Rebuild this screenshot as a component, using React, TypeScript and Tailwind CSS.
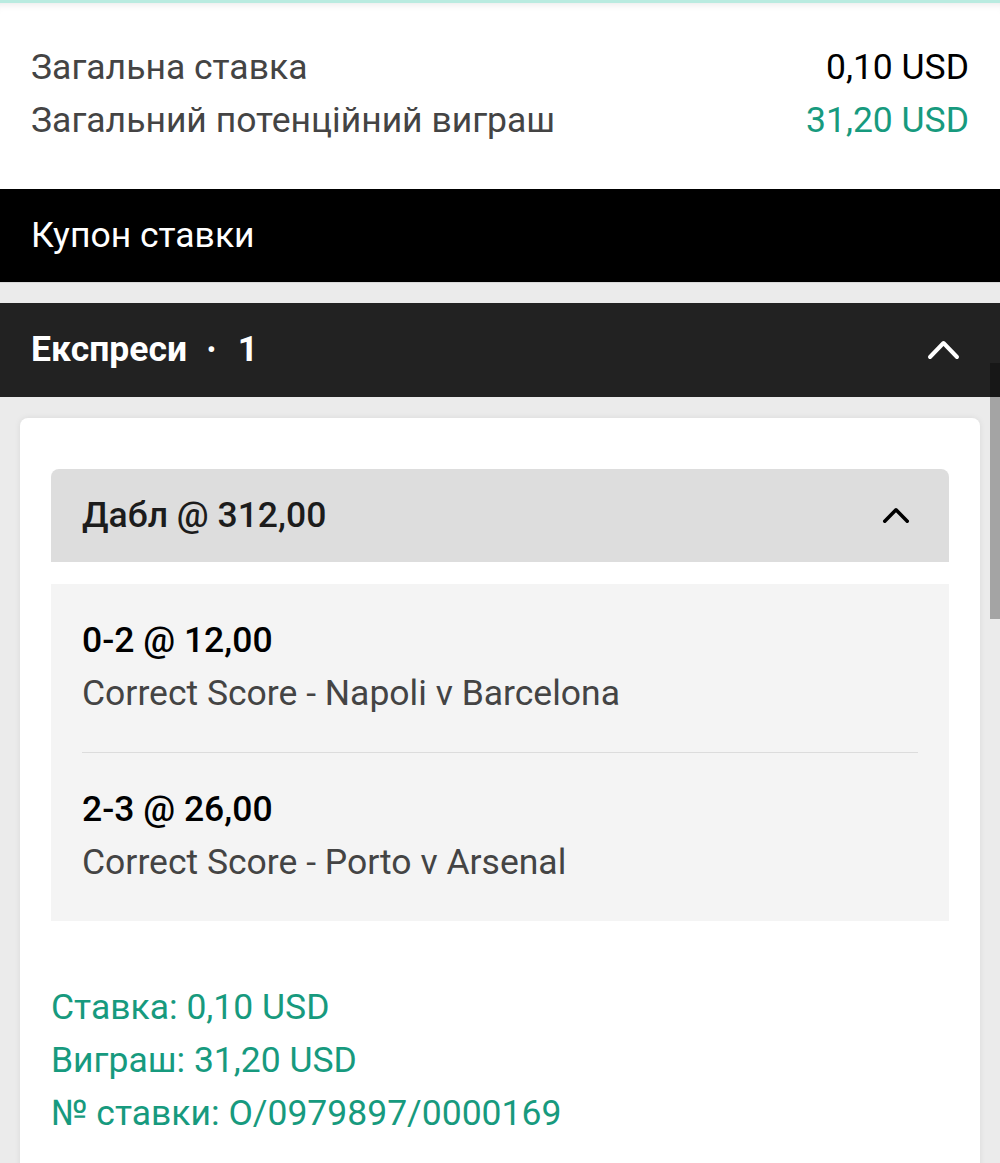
import React from "react";

const Chevron = ({ w, h, color, sw }: { w: number; h: number; color: string; sw: number }) => (
  <svg width={w} height={h} viewBox={`0 0 ${w} ${h}`} fill="none">
    <polyline
      points={`${sw / 2 + 1},${h - sw / 2 - 1} ${w / 2},${sw / 2 + 1} ${w - sw / 2 - 1},${h - sw / 2 - 1}`}
      stroke={color}
      strokeWidth={sw}
      strokeLinecap="round"
      strokeLinejoin="round"
    />
  </svg>
);

export default function App() {
  return (
    <div
      className="relative w-[1000px] h-[1163px] overflow-hidden bg-[#ebebeb]"
      style={{ fontFamily: "Roboto, 'Noto Sans', sans-serif" }}
    >
      {/* summary */}
      <div className="bg-white border-t-[3px] border-[#b9ebe0] shadow-[inset_0_8px_10px_-8px_rgba(0,0,0,0.12)] pt-[38px] pb-[42px] px-[31px]">
        <div className="flex justify-between items-center leading-[53px] text-[35.5px]">
          <span className="text-[#444]">Загальна ставка</span>
          <span className="text-black">0,10 USD</span>
        </div>
        <div className="flex justify-between items-center leading-[53px] text-[35.5px]">
          <span className="text-[#444]">Загальний потенційний виграш</span>
          <span className="text-[#179a7e]">31,20 USD</span>
        </div>
      </div>

      {/* coupon title */}
      <div className="h-[93px] bg-black flex items-center px-[31px] text-white text-[35.5px]">
        Купон ставки
      </div>

      <div className="h-[21px] bg-[#ebebeb] border-t border-[#d8d8d8]" />

      {/* expresses header */}
      <div className="h-[94px] bg-[#222222] flex items-center justify-between px-[31px] text-white text-[35.5px] font-bold">
        <span className="flex items-center">
          Експреси
          <span className="ml-[20px] mr-[22px] text-[24px]">•</span>
          1
        </span>
        <span className="mr-[9px]">
          <Chevron w={33} h={20} color="#ffffff" sw={4} />
        </span>
      </div>

      {/* card */}
      <div className="mx-5 mt-[21px] bg-white rounded-lg shadow-[0_0_6px_rgba(0,0,0,0.08)] px-[31px] pt-[51px] pb-[60px]">
        <div className="h-[93px] bg-[#dddddd] rounded-t-lg flex items-center justify-between pl-[31px] pr-[39px]">
          <span className="text-[35.5px] font-medium text-[#1c1c1c]">Дабл @ 312,00</span>
          <Chevron w={28} h={17} color="#000000" sw={3.5} />
        </div>

        <div className="mt-[22px] bg-[#f4f4f4] px-[31px] pt-[30px] pb-[32px]">
          <div className="leading-[53px] text-[35.5px] font-medium text-black">0-2 @ 12,00</div>
          <div className="leading-[53px] text-[35.5px] text-[#444]">Correct Score - Napoli v Barcelona</div>
          <div className="mt-[32px] mb-[30px] h-px bg-[#dcdcdc]" />
          <div className="leading-[53px] text-[35.5px] font-medium text-black">2-3 @ 26,00</div>
          <div className="leading-[53px] text-[35.5px] text-[#444]">Correct Score - Porto v Arsenal</div>
        </div>

        <div className="mt-[60px] text-[35.5px] text-[#179a7e]">
          <div className="leading-[53px]">Ставка: 0,10 USD</div>
          <div className="leading-[53px]">Виграш: 31,20 USD</div>
          <div className="leading-[53px]">№ ставки: O/0979897/0000169</div>
        </div>
      </div>

      {/* scrollbar */}
      <div className="absolute right-0 top-[363px] w-[10px] h-[256px] bg-black/30" />
    </div>
  );
}
